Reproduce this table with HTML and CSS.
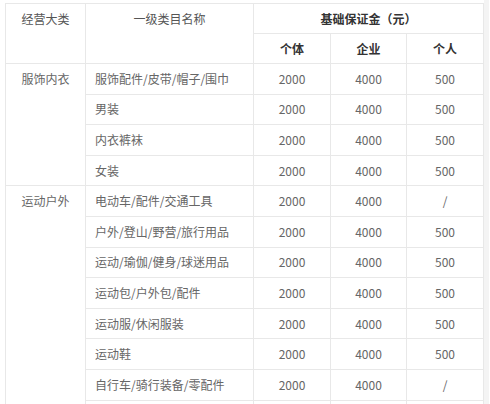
FILE: index.html
```html
<!DOCTYPE html>
<html lang="zh">
<head>
<meta charset="utf-8">
<link rel="stylesheet" href="styles.css">
</head>
<body>
<div class="wrap">
  <table class="fee">
    <colgroup>
      <col class="c1"><col class="c2"><col class="c3"><col class="c4"><col class="c5">
    </colgroup>
    <thead>
      <tr class="h1">
        <th rowspan="2" class="top">经营大类</th>
        <th rowspan="2" class="top">一级类目名称</th>
        <th colspan="3" class="strong">基础保证金（元）</th>
      </tr>
      <tr class="h2">
        <th class="strong">个体</th>
        <th class="strong">企业</th>
        <th class="strong">个人</th>
      </tr>
    </thead>
    <tbody>
      <tr><td rowspan="4" class="cat">服饰内衣</td><td class="name">服饰配件/皮带/帽子/围巾</td><td>2000</td><td>4000</td><td>500</td></tr>
      <tr><td class="name">男装</td><td>2000</td><td>4000</td><td>500</td></tr>
      <tr><td class="name">内衣裤袜</td><td>2000</td><td>4000</td><td>500</td></tr>
      <tr><td class="name">女装</td><td>2000</td><td>4000</td><td>500</td></tr>
      <tr><td rowspan="8" class="cat">运动户外</td><td class="name">电动车/配件/交通工具</td><td>2000</td><td>4000</td><td>/</td></tr>
      <tr><td class="name">户外/登山/野营/旅行用品</td><td>2000</td><td>4000</td><td>500</td></tr>
      <tr><td class="name">运动/瑜伽/健身/球迷用品</td><td>2000</td><td>4000</td><td>500</td></tr>
      <tr><td class="name">运动包/户外包/配件</td><td>2000</td><td>4000</td><td>500</td></tr>
      <tr><td class="name">运动服/休闲服装</td><td>2000</td><td>4000</td><td>500</td></tr>
      <tr><td class="name">运动鞋</td><td>2000</td><td>4000</td><td>500</td></tr>
      <tr><td class="name">自行车/骑行装备/零配件</td><td>2000</td><td>4000</td><td>/</td></tr>
      <tr><td class="name"></td><td></td><td></td><td></td></tr>
    </tbody>
  </table>
  <div class="strip"></div>
</div>
</body>
</html>
```

FILE: styles.css
```css
html, body {
  margin: 0;
  padding: 0;
  background: #ffffff;
  overflow: hidden;
}
.wrap {
  display: flex;
  align-items: stretch;
  padding-left: 5px;
  height: 404px;
  overflow: hidden;
}
.strip {
  width: 5px;
  background: #f4f4f4;
  margin-left: 0;
  flex: none;
}
.fee {
  border-collapse: collapse;
  table-layout: fixed;
  width: 478px;
  margin-top: 3px;
  font-family: "Noto Sans CJK SC", "Noto Sans", sans-serif;
  font-size: 12px;
  color: #666666;
  flex: none;
  align-self: flex-start;
}
.c1 { width: 80px; }
.c2 { width: 168px; }
.c3 { width: 77px; }
.c4 { width: 76px; }
.c5 { width: 77px; }
.fee th, .fee td {
  border: 1px solid #e8e8e8;
  padding: 0 9px;
  line-height: 18px;
  text-align: center;
  vertical-align: middle;
  font-weight: normal;
}
.fee thead tr { height: 30px; }
.fee tbody tr { height: 30.6px; }
.fee th.top {
  vertical-align: top;
  padding-top: 6px;
  color: #555555;
}
.fee th.strong {
  font-weight: bold;
  color: #333333;
}
.fee td.cat {
  vertical-align: top;
  padding-top: 6px;
}
.fee td.name {
  text-align: left;
}
```
